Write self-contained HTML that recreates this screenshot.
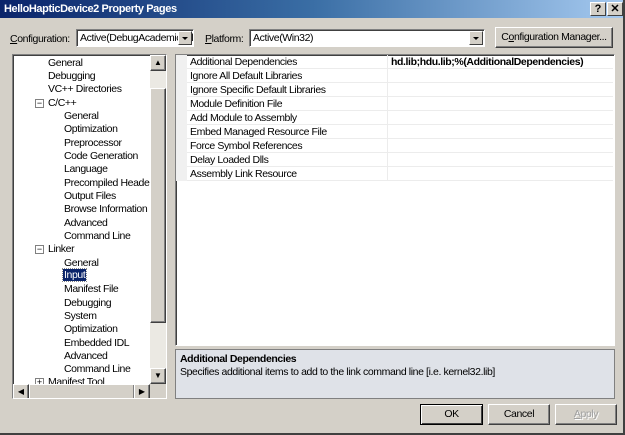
<!DOCTYPE html>
<html><head><style>
*{margin:0;padding:0;box-sizing:border-box}
body{width:625px;height:435px;background:#d4d0c8;font:10.5px "Liberation Sans",sans-serif;letter-spacing:-0.4px;color:#000;position:relative;overflow:hidden}
.a{position:absolute;white-space:nowrap}
.title{left:0;top:0;width:625px;height:18px;background:linear-gradient(90deg,#0a246a,#3a6ea5 50%,#a6caf0);color:#fff;font-weight:bold;font-size:11px;padding:3px 4px}
.tb{top:2px;width:16px;height:14px;background:#d4d0c8;border:1px solid;border-color:#fff #404040 #404040 #fff;font-weight:bold;font-size:11px;text-align:center;line-height:12px;color:#000;letter-spacing:0}
.sunk{border:1px solid;border-color:#808080 #fff #fff #808080;box-shadow:inset 1px 1px 0 #404040}
.combo{background:#fff;height:18px;padding:2px 3px;overflow:hidden}
.dd{position:absolute;right:1px;top:1px;width:14px;height:14px;background:#d4d0c8;border:1px solid;border-color:#fff #404040 #404040 #fff}
.dd:after{content:"";position:absolute;left:3px;top:5px;border:3px solid transparent;border-top:3px solid #000;border-bottom:0;width:0}
.btn{background:#d4d0c8;border:1px solid;border-color:#fff #404040 #404040 #fff;box-shadow:inset -1px -1px 0 #808080;text-align:center;line-height:19px;height:21px;white-space:nowrap;overflow:hidden}
.ar{letter-spacing:0}
.tr{position:absolute;left:0;white-space:nowrap}
.row{position:absolute;left:0;width:437px;height:14px;border-bottom:1px solid #ececec}
.row .m{position:absolute;left:0;top:0;width:11px;height:14px;background:#f0f0f0}
.row .n{position:absolute;left:14px;top:1px}
.row .v{position:absolute;left:211px;top:0;width:1px;height:14px;background:#ececec}
.box{position:absolute;width:9px;height:9px;border:1px solid #808080;background:#fff;font-size:9px;line-height:7px;text-align:center;letter-spacing:0}
</style></head><body>
<div class="a title">HelloHapticDevice2 Property Pages</div>
<div class="a tb" style="left:590px">?</div>
<div class="a tb" style="left:607px">✕</div>

<div class="a" style="left:10px;top:33px"><u>C</u>onfiguration:</div>
<div class="a sunk combo" style="left:76px;top:29px;width:118px">Active(DebugAcademicEd<div class="dd"></div></div>
<div class="a" style="left:205px;top:33px"><u>P</u>latform:</div>
<div class="a sunk combo" style="left:249px;top:29px;width:236px">Active(Win32)<div class="dd"></div></div>
<div class="a btn" style="left:495px;top:27px;width:118px">C<u>o</u>nfiguration Manager...</div>

<div class="a sunk" style="left:12px;top:54px;width:155px;height:345px;background:#fff;overflow:hidden">
 <div class="a" style="left:0;top:0;width:137px;height:329px;overflow:hidden">
  <div class="tr" style="left:35px;top:2px">General</div>
  <div class="tr" style="left:35px;top:15px">Debugging</div>
  <div class="tr" style="left:35px;top:28px">VC++ Directories</div>
  <div class="box" style="left:22px;top:44px">−</div><div class="tr" style="left:35px;top:42px">C/C++</div>
  <div class="tr" style="left:51px;top:55px">General</div>
  <div class="tr" style="left:51px;top:68px">Optimization</div>
  <div class="tr" style="left:51px;top:82px">Preprocessor</div>
  <div class="tr" style="left:51px;top:95px">Code Generation</div>
  <div class="tr" style="left:51px;top:108px">Language</div>
  <div class="tr" style="left:51px;top:122px">Precompiled Headers</div>
  <div class="tr" style="left:51px;top:135px">Output Files</div>
  <div class="tr" style="left:51px;top:148px">Browse Information</div>
  <div class="tr" style="left:51px;top:162px">Advanced</div>
  <div class="tr" style="left:51px;top:175px">Command Line</div>
  <div class="box" style="left:22px;top:190px">−</div><div class="tr" style="left:35px;top:188px">Linker</div>
  <div class="tr" style="left:51px;top:202px">General</div>
  <div class="tr" style="left:50px;top:214px;background:#0a246a;color:#fff;padding:0 1px;outline:1px dotted #888">Input</div>
  <div class="tr" style="left:51px;top:228px">Manifest File</div>
  <div class="tr" style="left:51px;top:242px">Debugging</div>
  <div class="tr" style="left:51px;top:255px">System</div>
  <div class="tr" style="left:51px;top:268px">Optimization</div>
  <div class="tr" style="left:51px;top:282px">Embedded IDL</div>
  <div class="tr" style="left:51px;top:295px">Advanced</div>
  <div class="tr" style="left:51px;top:308px">Command Line</div>
  <div class="box" style="left:22px;top:323px">+</div><div class="tr" style="left:35px;top:321px">Manifest Tool</div>
 </div>
 <div class="a" style="left:137px;top:0;width:16px;height:329px;background:#ebe9e3"></div>
 <div class="a btn ar" style="left:137px;top:0;width:16px;height:16px;line-height:14px;font-size:8px">▲</div>
 <div class="a btn" style="left:137px;top:33px;width:16px;height:235px"></div>
 <div class="a btn ar" style="left:137px;top:313px;width:16px;height:16px;line-height:14px;font-size:8px">▼</div>
 <div class="a" style="left:0;top:329px;width:137px;height:16px;background:#ebe9e3"></div>
 <div class="a btn ar" style="left:0;top:329px;width:16px;height:16px;line-height:14px;font-size:8px">◀</div>
 <div class="a btn" style="left:16px;top:329px;width:106px;height:16px"></div>
 <div class="a btn ar" style="left:121px;top:329px;width:16px;height:16px;line-height:14px;font-size:8px">▶</div>
 <div class="a" style="left:137px;top:329px;width:16px;height:16px;background:#d4d0c8"></div>
</div>

<div class="a sunk" style="left:175px;top:54px;width:440px;height:292px;background:#fff">
 <div class="row" style="top:0"><div class="m"></div><div class="n">Additional Dependencies</div><div class="v"></div><div class="a" style="left:215px;top:1px;font-weight:bold">hd.lib;hdu.lib;%(AdditionalDependencies)</div></div>
 <div class="row" style="top:14px"><div class="m"></div><div class="n">Ignore All Default Libraries</div><div class="v"></div></div>
 <div class="row" style="top:28px"><div class="m"></div><div class="n">Ignore Specific Default Libraries</div><div class="v"></div></div>
 <div class="row" style="top:42px"><div class="m"></div><div class="n">Module Definition File</div><div class="v"></div></div>
 <div class="row" style="top:56px"><div class="m"></div><div class="n">Add Module to Assembly</div><div class="v"></div></div>
 <div class="row" style="top:70px"><div class="m"></div><div class="n">Embed Managed Resource File</div><div class="v"></div></div>
 <div class="row" style="top:84px"><div class="m"></div><div class="n">Force Symbol References</div><div class="v"></div></div>
 <div class="row" style="top:98px"><div class="m"></div><div class="n">Delay Loaded Dlls</div><div class="v"></div></div>
 <div class="row" style="top:112px"><div class="m"></div><div class="n">Assembly Link Resource</div><div class="v"></div></div>
</div>

<div class="a" style="left:175px;top:349px;width:440px;height:50px;background:#dfe2e8;border:1px solid #808080;padding:3px 4px">
 <div style="font-weight:bold">Additional Dependencies</div>
 <div style="margin-top:1px">Specifies additional items to add to the link command line [i.e. kernel32.lib]</div>
</div>

<div class="a" style="left:0;top:433px;width:625px;height:2px;background:#404040"></div>
<div class="a" style="left:623px;top:0;width:2px;height:435px;background:#404040"></div>

<div class="a btn" style="left:420px;top:404px;width:63px;border:1px solid #000;box-shadow:inset 1px 1px 0 #fff,inset -1px -1px 0 #404040">OK</div>
<div class="a btn" style="left:488px;top:404px;width:62px">Cancel</div>
<div class="a btn" style="left:555px;top:404px;width:62px;color:#a0a0a0;text-shadow:1px 1px 0 #fff"><u>A</u>pply</div>
</body></html>
